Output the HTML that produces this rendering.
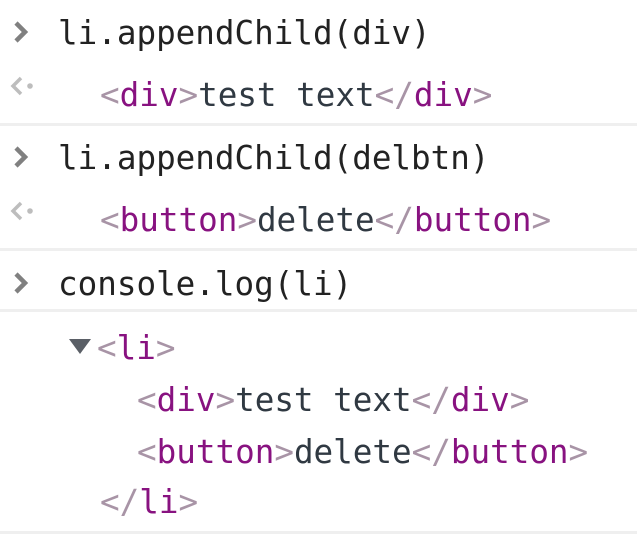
<!DOCTYPE html>
<html><head><style>
body{margin:0;width:637px;height:537px;background:#fff;position:relative;overflow:hidden;font-family:"DejaVu Sans Mono",monospace;font-size:32.6px;}
.l{position:absolute;line-height:40px;white-space:pre;}
.in{color:#222;}
.v{color:#303942;}
.b{color:#a894a6;}
.t{color:#881280;}
.sep{position:absolute;left:0;width:637px;height:3px;background:#efefef;}
svg{position:absolute;}
</style></head><body>
<svg style="left:12px;top:20px" width="20" height="24" viewBox="0 0 20 24"><path d="M4 3 L13 12 L4 21" stroke="#808080" stroke-width="4.5" fill="none"/></svg>
<div class="l in" style="left:58px;top:13px">li.appendChild(div)</div>
<svg style="left:8px;top:75px" width="26" height="22" viewBox="0 0 26 22"><path d="M13 3 L5 11 L13 19" stroke="#bdbdbd" stroke-width="3.5" fill="none"/><circle cx="22" cy="11" r="2.8" fill="#bdbdbd"/></svg>
<div class="l" style="left:100px;top:75px"><span class="b">&lt;</span><span class="t">div</span><span class="b">&gt;</span><span class="v">test text</span><span class="b">&lt;/</span><span class="t">div</span><span class="b">&gt;</span></div>
<div class="sep" style="top:123px"></div>
<svg style="left:12px;top:145px" width="20" height="24" viewBox="0 0 20 24"><path d="M4 3 L13 12 L4 21" stroke="#808080" stroke-width="4.5" fill="none"/></svg>
<div class="l in" style="left:58px;top:138px">li.appendChild(delbtn)</div>
<svg style="left:8px;top:200px" width="26" height="22" viewBox="0 0 26 22"><path d="M13 3 L5 11 L13 19" stroke="#bdbdbd" stroke-width="3.5" fill="none"/><circle cx="22" cy="11" r="2.8" fill="#bdbdbd"/></svg>
<div class="l" style="left:100px;top:200px"><span class="b">&lt;</span><span class="t">button</span><span class="b">&gt;</span><span class="v">delete</span><span class="b">&lt;/</span><span class="t">button</span><span class="b">&gt;</span></div>
<div class="sep" style="top:248px"></div>
<svg style="left:12px;top:271px" width="20" height="24" viewBox="0 0 20 24"><path d="M4 3 L13 12 L4 21" stroke="#808080" stroke-width="4.5" fill="none"/></svg>
<div class="l in" style="left:58px;top:264px">console.log(li)</div>
<div class="sep" style="top:309px"></div>
<svg style="left:68px;top:338px" width="24" height="18" viewBox="0 0 24 18"><path d="M1 1 L23 1 L12 16 Z" fill="#5a5f66"/></svg>
<div class="l" style="left:97px;top:328px"><span class="b">&lt;</span><span class="t">li</span><span class="b">&gt;</span></div>
<div class="l" style="left:137px;top:380px"><span class="b">&lt;</span><span class="t">div</span><span class="b">&gt;</span><span class="v">test text</span><span class="b">&lt;/</span><span class="t">div</span><span class="b">&gt;</span></div>
<div class="l" style="left:137px;top:432px"><span class="b">&lt;</span><span class="t">button</span><span class="b">&gt;</span><span class="v">delete</span><span class="b">&lt;/</span><span class="t">button</span><span class="b">&gt;</span></div>
<div class="l" style="left:100px;top:482px"><span class="b">&lt;/</span><span class="t">li</span><span class="b">&gt;</span></div>
<div class="sep" style="top:531px"></div>
</body></html>
